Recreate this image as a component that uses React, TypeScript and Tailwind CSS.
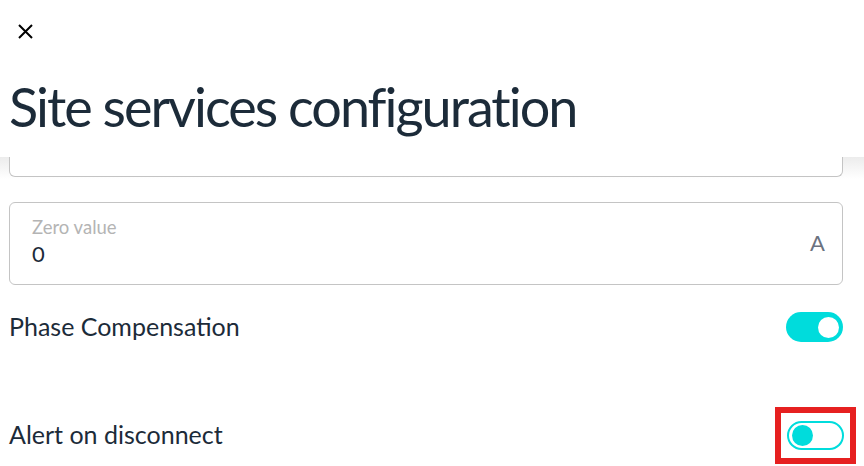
import React from "react";

function Toggle({ on }: { on: boolean }) {
  if (on) {
    return (
      <div className="flex h-[30px] w-[57px] items-center justify-end rounded-full bg-[#00dcdc] pr-[4px]">
        <div className="h-[21px] w-[21px] rounded-full bg-white" />
      </div>
    );
  }
  return (
    <div className="flex h-[29px] w-[57px] items-center rounded-full border-2 border-[#00dcdc] bg-white pl-[3px]">
      <div className="h-[21px] w-[21px] rounded-full bg-[#00dcdc]" />
    </div>
  );
}

export default function App() {
  return (
    <div
      className="h-[466px] w-[864px] overflow-hidden bg-white text-[#1c2b39]"
      style={{ fontFamily: "Lato, 'Noto Sans', sans-serif" }}
    >
      <div className="h-[157px] px-[9px] pt-[22px]">
        <button className="ml-[7px] flex h-[19px] w-[19px] items-center justify-center">
          <svg width="17" height="17" viewBox="0 0 17 17" fill="none" stroke="#000" strokeWidth="2">
            <path d="M2 2L15 15M15 2L2 15" />
          </svg>
        </button>
        <h1 className="mt-[36px] text-[54px] leading-[60px] tracking-[-2px]">Site services configuration</h1>
      </div>
      <div className="relative">
        <div className="absolute inset-x-0 top-0 h-[22px] bg-gradient-to-b from-[#ececec] to-white" />
        <div className="relative px-[9px]">
          <div className="h-[20px] w-[834px] rounded-b-[6px] border-x border-b border-[#c4c4c4] bg-white" />
          <div className="mt-[25px] flex h-[83px] w-[834px] items-center rounded-[6px] border border-[#c4c4c4] bg-white pl-[22px] pr-[17px]">
            <div className="flex-1 pb-[4px]">
              <div className="text-[18.5px] leading-[20px] text-[#b4b4b4]">Zero value</div>
              <div className="mt-[5px] text-[22px] leading-[24px] text-[#1c2b39]">0</div>
            </div>
            <div className="mt-[-2px] text-[22px] text-[#6b7280]">A</div>
          </div>
          <div className="mt-[27px] flex h-[30px] w-[834px] items-center justify-between">
            <span className="text-[25px]">Phase Compensation</span>
            <Toggle on />
          </div>
          <div className="mt-[78px] flex h-[30px] w-[834px] items-center justify-between">
            <span className="text-[25px]">Alert on disconnect</span>
            <div className="mr-[-13px] flex h-[57px] w-[81px] items-center justify-center border-[6px] border-[#e62020]">
              <Toggle on={false} />
            </div>
          </div>
        </div>
      </div>
    </div>
  );
}
